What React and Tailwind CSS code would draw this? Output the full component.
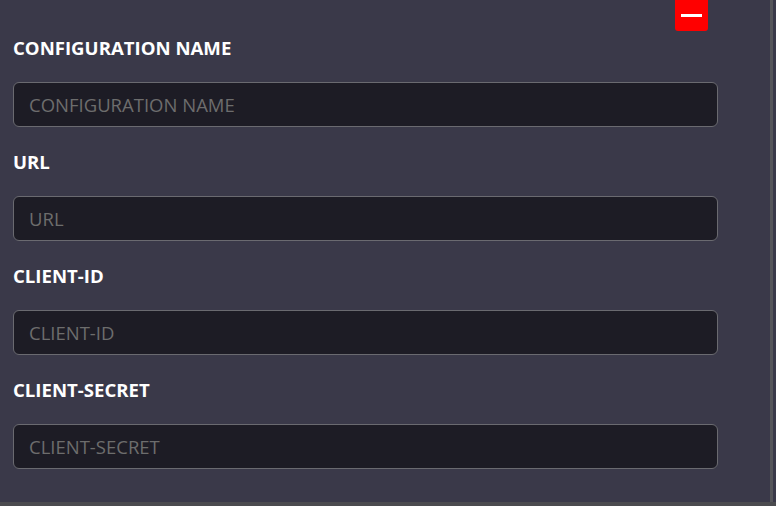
const fields = ['CONFIGURATION NAME', 'URL', 'CLIENT-ID', 'CLIENT-SECRET'];

export default function App() {
  return (
    <div
      className="flex h-[506px] w-[776px] flex-col overflow-hidden bg-[#4b4b4f]"
      style={{ fontFamily: '"Open Sans", "Segoe UI", sans-serif' }}
    >
      <div className="flex h-[502px] w-full">
        <div className="relative h-full w-[770px] bg-[#3a3949] pl-[13px] pt-[35px]">
          <button
            type="button"
            className="absolute left-[675px] top-0 flex h-[31px] w-[33px] items-center justify-center rounded-b-[3px] bg-[#ff0000]"
          >
            <span className="block h-[3px] w-[21px] bg-white" />
          </button>
          <div className="flex flex-col">
            {fields.map((f) => (
              <div key={f} className="mb-[22px] flex flex-col">
                <label className="mb-[21px] h-[26px] text-[18.6px] font-bold leading-[26px] text-white">
                  {f}
                </label>
                <input
                  placeholder={f}
                  className="h-[45px] w-[705px] rounded-[6px] border border-[#6a6a70] bg-[#1d1c25] px-[15px] text-[18.5px] text-white outline-none placeholder:text-[#6d6d6d]"
                />
              </div>
            ))}
          </div>
        </div>
        <div className="h-full w-[3px] bg-[#55555a]" />
        <div className="h-full flex-1 bg-[#3a3949]" />
      </div>
    </div>
  );
}
